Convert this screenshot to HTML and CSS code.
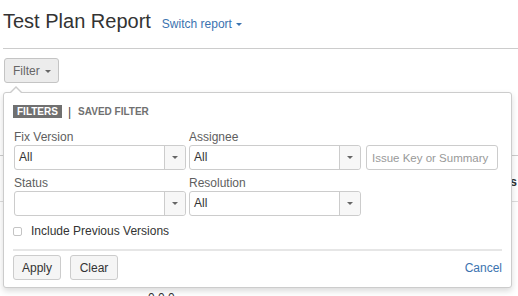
FILE: index.html
```html
<!DOCTYPE html>
<html lang="en">
<head>
    <meta charset="UTF-8">
    <meta name="viewport" content="width=device-width, initial-scale=1.0">
    <title>Test Plan Report</title>
    <link rel="stylesheet" href="styles.css">
</head>
<body>
    <div class="page">
        <div class="header">
            <h1>Test Plan Report</h1>
            <a class="switch" href="#">Switch report <span class="caret"></span></a>
        </div>

        <div class="filter-bar">
            <button class="filter-btn">Filter <span class="caret"></span></button>

            <div class="filter-popup">
                <div class="tabs">
                    <span class="tab active">Filters</span>
                    <span class="tab-sep">|</span>
                    <span class="tab">Saved filter</span>
                </div>

                <div class="fields">
                    <label class="lbl">Fix Version</label>
                    <label class="lbl">Assignee</label>
                    <span></span>
                    <div class="select"><span class="value">All</span><span class="arrow"></span></div>
                    <div class="select"><span class="value">All</span><span class="arrow"></span></div>
                    <input class="search" type="text" placeholder="Issue Key or Summary">
                    <label class="lbl">Status</label>
                    <label class="lbl">Resolution</label>
                    <span></span>
                    <div class="select"><span class="value"></span><span class="arrow"></span></div>
                    <div class="select"><span class="value">All</span><span class="arrow"></span></div>
                </div>

                <div class="check-row">
                    <span class="checkbox"></span>
                    <span>Include Previous Versions</span>
                </div>

                <div class="footer">
                    <button class="btn">Apply</button>
                    <button class="btn">Clear</button>
                    <a class="cancel" href="#">Cancel</a>
                </div>
            </div>
        </div>

        <div class="results">
            <div class="results-head"><span>Tests</span></div>
            <div class="results-row"><span>0.0.0</span></div>
        </div>
    </div>
</body>
</html>
```

FILE: styles.css
```css
html, body {
    margin: 0;
    overflow: hidden;
}
body {
    font-family: "Liberation Sans", Arial, sans-serif;
    font-size: 12px;
    line-height: 14px;
    color: #333;
    background-color: #fff;
}
.page {
    padding-left: 3px;
}
.header {
    display: flex;
    align-items: baseline;
    gap: 11px;
    padding-top: 9px;
    padding-bottom: 15px;
    border-bottom: 1px solid #ccc;
}
.header h1 {
    margin: 0;
    font-size: 20px;
    line-height: 24px;
    font-weight: normal;
    color: #333;
}
.switch {
    color: #3b73af;
    text-decoration: none;
    font-size: 12px;
}
.caret {
    display: inline-block;
    width: 0;
    height: 0;
    border-top: 3px solid currentColor;
    border-left: 3px solid transparent;
    border-right: 3px solid transparent;
    vertical-align: middle;
    margin-left: 1px;
}
.filter-bar {
    position: relative;
    margin-top: 9px;
    height: 25px;
}
.filter-btn {
    margin-left: 1px;
    height: 25px;
    width: 55px;
    padding: 0 0 0 8px;
    text-align: left;
    font-family: inherit;
    font-size: 12px;
    color: #666;
    background-color: #ececec;
    border: 1px solid #c4c4c4;
    border-radius: 3px;
}
.filter-btn .caret {
    margin-left: 2px;
    color: #666;
}
.filter-popup {
    position: absolute;
    left: 0;
    top: 34px;
    width: 509px;
    box-sizing: border-box;
    padding: 12px 9px 7px 10px;
    background-color: #fff;
    border: 1px solid #ccc;
    border-radius: 3px;
    box-shadow: 0 3px 6px rgba(0,0,0,0.15);
    z-index: 2;
}
.filter-popup::before,
.filter-popup::after {
    content: "";
    position: absolute;
    width: 0;
    height: 0;
    border-left: 6px solid transparent;
    border-right: 6px solid transparent;
}
.filter-popup::before {
    left: 6px;
    top: -7px;
    border-bottom: 6px solid #ccc;
}
.filter-popup::after {
    left: 7px;
    top: -5px;
    border-left-width: 5px;
    border-right-width: 5px;
    border-bottom: 5px solid #fff;
}
.tabs {
    display: flex;
    align-items: center;
    height: 13px;
    margin-left: -1px;
}
.tab {
    font-size: 10px;
    line-height: 13px;
    font-weight: bold;
    text-transform: uppercase;
    color: #707070;
}
.tab.active {
    padding: 0 4px;
    background-color: #707070;
    color: #fff;
}
.tab-sep {
    margin: 0 7px 0 6px;
    color: #444;
    font-size: 12px;
}
.fields {
    display: grid;
    grid-template-columns: 172px 172px 134px;
    column-gap: 3px;
    margin-top: 12px;
}
.lbl {
    color: #5e5e5e;
    margin-bottom: 1px;
}
.fields .lbl:nth-child(7),
.fields .lbl:nth-child(8) {
    margin-top: 6px;
}
.select {
    display: flex;
    height: 25px;
    box-sizing: border-box;
    border: 1px solid #ccc;
    border-radius: 3px;
    background-color: #fff;
}
.select .value {
    flex: 1;
    padding-left: 4px;
    line-height: 23px;
    color: #333;
}
.select .arrow {
    width: 20px;
    border-left: 1px solid #ccc;
    border-radius: 0 3px 3px 0;
    background-color: #f7f7f7;
    display: flex;
    align-items: center;
    justify-content: center;
}
.select .arrow::after {
    content: "";
    width: 0;
    height: 0;
    border-top: 3px solid #666;
    border-left: 3px solid transparent;
    border-right: 3px solid transparent;
}
.search {
    margin-left: 2px;
    height: 25px;
    box-sizing: border-box;
    padding: 0 0 0 5px;
    border: 1px solid #ccc;
    border-radius: 3px;
    font-family: inherit;
    font-size: 11.5px;
    color: #333;
}
.search::placeholder {
    color: #999;
}
.check-row {
    display: flex;
    align-items: center;
    margin-top: 8px;
    margin-left: -1px;
    color: #333;
}
.checkbox {
    width: 9px;
    height: 9px;
    box-sizing: border-box;
    border: 1px solid #c4c4c4;
    border-radius: 2px;
    margin-right: 9px;
}
.footer {
    display: flex;
    align-items: center;
    gap: 9px;
    margin-top: 11px;
    padding-top: 4px;
    border-top: 2px solid #e6e6e6;
    margin-left: -1px;
}
.btn {
    width: 48px;
    height: 25px;
    padding: 0;
    font-family: inherit;
    font-size: 12px;
    color: #333;
    background-color: #f5f5f5;
    border: 1px solid #ccc;
    border-radius: 3px;
}
.cancel {
    margin-left: auto;
    color: #3b73af;
    text-decoration: none;
}
.results {
    margin-top: 72px;
    margin-left: -3px;
}
.results-head {
    display: flex;
    justify-content: flex-end;
    align-items: flex-end;
    height: 45px;
    padding-right: 1px;
    border-top: 1px solid #ccc;
    border-bottom: 1px solid #ddd;
    font-weight: bold;
    line-height: 38px;
}
.results-row {
    padding-top: 89px;
    padding-left: 148px;
}
```
